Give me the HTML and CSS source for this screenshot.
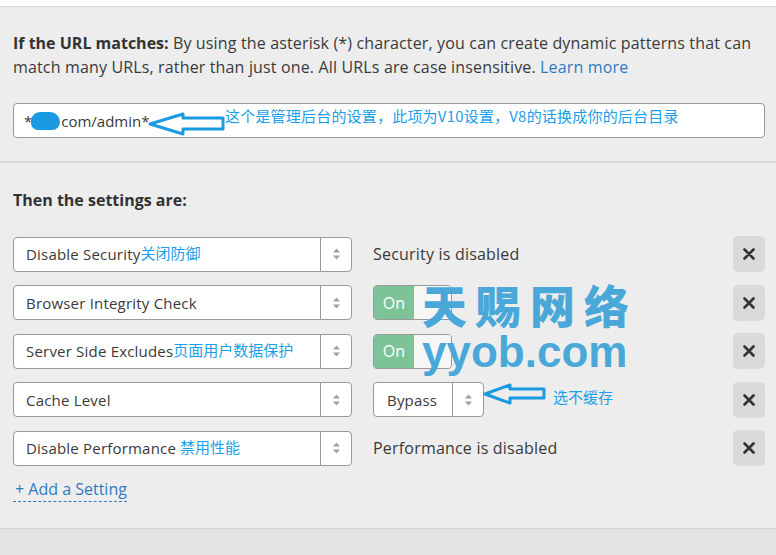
FILE: index.html
```html
<!DOCTYPE html>
<html lang="en">
<head>
<meta charset="utf-8">
<title>Page Rule</title>
<link rel="stylesheet" href="styles.css">
</head>
<body>
<div class="top-strip"></div>
<section class="sec url-sec">
  <p class="desc"><strong>If the URL matches:</strong> By using the asterisk (*) character, you can create dynamic patterns that can match many URLs, rather than just one. All URLs are case insensitive. <a class="link" href="#">Learn more</a></p>
  <div class="url-input">
    <span class="url-text">*<span class="blob"></span>com/admin*</span>
    <svg class="arrow arrow-url" width="78" height="24" viewBox="0 0 78 24"><polygon points="2,12 35,2 35,6 75,6 75,17 35,17 35,22" fill="none" stroke="#1a9ae0" stroke-width="3" stroke-linejoin="round"/></svg>
    <span class="note note-url">这个是管理后台的设置，此项为V10设置，V8的话换成你的后台目录</span>
  </div>
</section>
<section class="sec settings-sec">
  <h2 class="heading">Then the settings are:</h2>
  <div class="rows">
    <div class="row">
      <div class="select"><span class="sel-label">Disable Security<span class="note inline-note">关闭防御</span></span><span class="sel-arrows"><svg width="9" height="14" viewBox="0 0 9 14"><path d="M1 5.5 L4.5 1.5 L8 5.5Z M1 8.5 L4.5 12.5 L8 8.5Z" fill="#a0a0a0"/></svg></span></div>
      <div class="value">Security is disabled</div>
      <button class="remove" type="button"><svg width="12" height="12" viewBox="0 0 12 12"><path d="M1.5 1.5 L10.5 10.5 M10.5 1.5 L1.5 10.5" stroke="#333" stroke-width="2.6" stroke-linecap="round"/></svg></button>
    </div>
    <div class="row">
      <div class="select"><span class="sel-label">Browser Integrity Check</span><span class="sel-arrows"><svg width="9" height="14" viewBox="0 0 9 14"><path d="M1 5.5 L4.5 1.5 L8 5.5Z M1 8.5 L4.5 12.5 L8 8.5Z" fill="#a0a0a0"/></svg></span></div>
      <div class="value"><div class="toggle"><span class="toggle-on">On</span><span class="toggle-off"></span></div></div>
      <button class="remove" type="button"><svg width="12" height="12" viewBox="0 0 12 12"><path d="M1.5 1.5 L10.5 10.5 M10.5 1.5 L1.5 10.5" stroke="#333" stroke-width="2.6" stroke-linecap="round"/></svg></button>
    </div>
    <div class="row">
      <div class="select"><span class="sel-label">Server Side Excludes<span class="note inline-note">页面用户数据保护</span></span><span class="sel-arrows"><svg width="9" height="14" viewBox="0 0 9 14"><path d="M1 5.5 L4.5 1.5 L8 5.5Z M1 8.5 L4.5 12.5 L8 8.5Z" fill="#a0a0a0"/></svg></span></div>
      <div class="value"><div class="toggle"><span class="toggle-on">On</span><span class="toggle-off"></span></div></div>
      <button class="remove" type="button"><svg width="12" height="12" viewBox="0 0 12 12"><path d="M1.5 1.5 L10.5 10.5 M10.5 1.5 L1.5 10.5" stroke="#333" stroke-width="2.6" stroke-linecap="round"/></svg></button>
    </div>
    <div class="row">
      <div class="select"><span class="sel-label">Cache Level</span><span class="sel-arrows"><svg width="9" height="14" viewBox="0 0 9 14"><path d="M1 5.5 L4.5 1.5 L8 5.5Z M1 8.5 L4.5 12.5 L8 8.5Z" fill="#a0a0a0"/></svg></span></div>
      <div class="value value-cache">
        <div class="select small-select"><span class="sel-label">Bypass</span><span class="sel-arrows"><svg width="9" height="14" viewBox="0 0 9 14"><path d="M1 5.5 L4.5 1.5 L8 5.5Z M1 8.5 L4.5 12.5 L8 8.5Z" fill="#a0a0a0"/></svg></span></div>
        <svg class="arrow arrow-cache" width="64" height="22" viewBox="0 0 64 22"><polygon points="2,11 27,2 27,6 61,6 61,15 27,15 27,20" fill="none" stroke="#1a9ae0" stroke-width="3" stroke-linejoin="round"/></svg>
        <span class="note note-cache">选不缓存</span>
      </div>
      <button class="remove" type="button"><svg width="12" height="12" viewBox="0 0 12 12"><path d="M1.5 1.5 L10.5 10.5 M10.5 1.5 L1.5 10.5" stroke="#333" stroke-width="2.6" stroke-linecap="round"/></svg></button>
    </div>
    <div class="row">
      <div class="select"><span class="sel-label">Disable Performance<span class="note inline-note spaced-note">禁用性能</span></span><span class="sel-arrows"><svg width="9" height="14" viewBox="0 0 9 14"><path d="M1 5.5 L4.5 1.5 L8 5.5Z M1 8.5 L4.5 12.5 L8 8.5Z" fill="#a0a0a0"/></svg></span></div>
      <div class="value">Performance is disabled</div>
      <button class="remove" type="button"><svg width="12" height="12" viewBox="0 0 12 12"><path d="M1.5 1.5 L10.5 10.5 M10.5 1.5 L1.5 10.5" stroke="#333" stroke-width="2.6" stroke-linecap="round"/></svg></button>
    </div>
  </div>
  <a class="add" href="#">+ Add a Setting</a>
  <div class="watermark">
    <span class="wm-cn">天赐网络</span>
    <span class="wm-en">yyob.com</span>
  </div>
</section>
<div class="footer"></div>
</body>
</html>
```
FILE: styles.css
```css
* { box-sizing: border-box; }
html, body { margin: 0; padding: 0; }
body {
  background: #e4e4e4;
  font-family: "Open Sans", "Noto Sans", sans-serif;
  color: #3a3a3a;
  font-size: 16px;
  width: 776px;
  height: 555px;
  overflow: hidden;
}
.top-strip {
  height: 7px;
  background: #ffffff;
  border-bottom: 1px solid #d8d8d8;
}
.sec {
  background: #ededed;
  padding: 24px 11px 24px 13px;
}
.url-sec {
  padding-top: 24px;
  padding-bottom: 23px;
  border-bottom: 2px solid #d6d6d6;
}
.desc {
  margin: 0;
  line-height: 24px;
  font-size: 16px;
  letter-spacing: 0.15px;
}
.desc strong { font-weight: 700; color: #333; letter-spacing: 0; }
.link { color: #2f7bbf; text-decoration: none; }
.url-input {
  position: relative;
  margin-top: 24px;
  height: 35px;
  background: #fff;
  border: 1px solid #999;
  border-radius: 4px;
  padding: 0 10px;
  display: flex;
  align-items: center;
}
.url-text { font-size: 15px; color: #3a3a3a; display: flex; align-items: center; }
.blob {
  display: inline-block;
  width: 29px;
  height: 18px;
  margin: 0 1px 0 -1px;
  background: #1a9ae0;
  border-radius: 9px 10px 8px 7px;
}
.note {
  color: #1aa0e8;
  font-family: "Noto Sans CJK SC", "Noto Sans", sans-serif;
  font-size: 15px;
  letter-spacing: 0;
}
.arrow { position: absolute; }
.arrow-url { left: 134px; top: 8px; }
.note-url { position: absolute; left: 211px; top: 2px; line-height: 20px; letter-spacing: 0.2px; }
.settings-sec {
  padding-top: 25px;
  padding-bottom: 26px;
  border-bottom: 1px solid #d5d5d5;
  position: relative;
}
.heading {
  margin: 0 0 24px;
  font-size: 16px;
  line-height: 24px;
  font-weight: 700;
  color: #333;
}
.rows {
  display: flex;
  flex-direction: column;
  gap: 13.5px;
}
.row {
  display: grid;
  grid-template-columns: 339px 1fr 32px;
  column-gap: 21px;
  align-items: center;
  height: 35px;
}
.select {
  height: 35px;
  background: #fff;
  border: 1px solid #999;
  border-radius: 4px;
  display: flex;
  align-items: stretch;
}
.sel-label {
  flex: 1;
  display: flex;
  align-items: center;
  padding-left: 12px;
  font-size: 15px;
  letter-spacing: 0.2px;
  color: #3a3a3a;
  white-space: nowrap;
}
.inline-note { margin-top: -4px; }
.spaced-note { margin-left: 4px; }
.sel-arrows {
  width: 31px;
  border-left: 1px solid #999;
  display: flex;
  align-items: center;
  justify-content: center;
}
.value {
  font-size: 16px;
  letter-spacing: 0.2px;
  color: #3a3a3a;
  display: flex;
  align-items: center;
}
.value-cache { position: relative; }
.small-select { width: 111px; }
.small-select .sel-label { padding-left: 13px; }
.arrow-cache { left: 110px; top: 1px; }
.note-cache { position: absolute; left: 180px; top: 5px; line-height: 20px; }
.toggle {
  width: 79px;
  height: 35px;
  border: 1px solid #999;
  border-radius: 4px;
  overflow: hidden;
  display: flex;
}
.toggle-on {
  width: 40px;
  background: #7cc497;
  color: #fff;
  font-size: 16px;
  display: flex;
  align-items: center;
  justify-content: center;
}
.toggle-off { flex: 1; background: #f6f6f6; }
.remove {
  width: 32px;
  height: 36px;
  border: none;
  border-radius: 5px;
  background: #dadada;
  padding: 0;
  display: flex;
  align-items: center;
  justify-content: center;
}
.add {
  display: inline-block;
  margin-top: 12px;
  padding-left: 2px;
  line-height: 24px;
  color: #2f7bbf;
  text-decoration: none;
  font-size: 16px;
  border-bottom: 1px dashed #2f7bbf;
}
.watermark {
  position: absolute;
  left: 422px;
  top: 116px;
  display: flex;
  flex-direction: column;
  pointer-events: none;
}
.wm-cn {
  font-family: "Noto Sans CJK SC", sans-serif;
  font-weight: 900;
  font-size: 45px;
  line-height: 52px;
  letter-spacing: 9px;
  color: #4aa8d9;
}
.wm-en {
  font-family: "Liberation Sans", sans-serif;
  font-weight: 700;
  font-size: 44px;
  line-height: 42px;
  letter-spacing: 0px;
  color: #4aa8d9;
}
.footer { height: 30px; background: #e4e4e4; }
```
